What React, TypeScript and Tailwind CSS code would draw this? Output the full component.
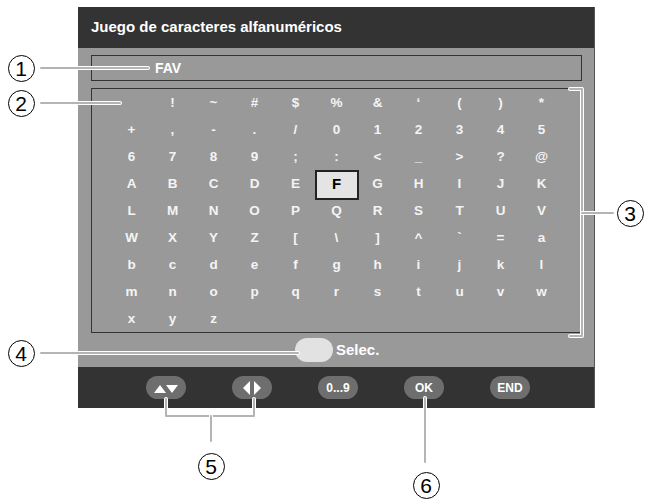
import React from "react";

const rows: string[][] = [
  [" ", "!", "~", "#", "$", "%", "&", "‘", "(", ")", "*"],
  ["+", ",", "-", ".", "/", "0", "1", "2", "3", "4", "5"],
  ["6", "7", "8", "9", ";", ":", "<", "_", ">", "?", "@"],
  ["A", "B", "C", "D", "E", "F", "G", "H", "I", "J", "K"],
  ["L", "M", "N", "O", "P", "Q", "R", "S", "T", "U", "V"],
  ["W", "X", "Y", "Z", "[", "\\", "]", "^", "`", "=", "a"],
  ["b", "c", "d", "e", "f", "g", "h", "i", "j", "k", "l"],
  ["m", "n", "o", "p", "q", "r", "s", "t", "u", "v", "w"],
  ["x", "y", "z"],
];

function Pill({ children }: { children: React.ReactNode }) {
  return (
    <div className="w-[40px] h-[23px] rounded-full bg-[#6e6e6e] flex items-center justify-center text-white text-[12px] font-bold">
      {children}
    </div>
  );
}

function Line({ d }: { d: string }) {
  return (
    <g>
      <path d={d} fill="none" stroke="#ffffff" strokeWidth={4} strokeLinecap="round" strokeLinejoin="round" />
      <path d={d} fill="none" stroke="#b4b4b4" strokeWidth={2} strokeLinecap="round" strokeLinejoin="round" />
    </g>
  );
}

function Num({ x, y, c }: { x: number; y: number; c: string }) {
  return (
    <div
      className="absolute w-[27px] h-[27px] rounded-full border-[1.3px] border-black bg-transparent flex items-center justify-center text-[21px] leading-none text-black"
      style={{ left: x - 13.5, top: y - 13.5 }}
    >
      <span className="mt-[1px]">{c}</span>
    </div>
  );
}

export default function App() {
  return (
    <div
      className="relative w-[646px] h-[500px] bg-white overflow-hidden"
      style={{ fontFamily: '"Liberation Sans", Arial, sans-serif' }}
    >
      <div className="ml-[78px] mt-[7px] w-[517px] h-[401px] flex flex-col border-r border-[#555]">
        <div className="h-[41px] bg-[#333333] flex items-center pl-[13px] text-white font-bold text-[15px]">
          Juego de caracteres alfanuméricos
        </div>
        <div className="flex-1 bg-[#999999] flex flex-col pl-[13px] pr-[12px] pt-[7px]">
          <div className="h-[26px] border-[1.5px] border-[#333] flex items-center pl-[63px] text-white font-bold text-[14px]">
            FAV
          </div>
          <div className="mt-[7px] h-[245px] border-[1.5px] border-[#333] pt-[1px] pl-[19px]">
            {rows.map((r, ri) => (
              <div key={ri} className="flex h-[27px]">
                {r.map((ch, ci) =>
                  ch === "F" ? (
                    <div key={ci} className="w-[41px] h-[27px] flex items-center justify-center">
                      <div className="w-[44px] h-[30px] shrink-0 bg-[#e4e4e4] border-2 border-[#222] flex items-center justify-center text-black font-bold text-[15px]">
                        F
                      </div>
                    </div>
                  ) : (
                    <div
                      key={ci}
                      className="w-[41px] h-[27px] flex items-center justify-center text-[#f4f4f4] font-bold text-[13.5px]"
                    >
                      {ch === " " ? "\u00a0" : ch}
                    </div>
                  )
                )}
              </div>
            ))}
          </div>
          <div className="h-[34px] flex items-center pl-[204px]">
            <div className="w-[38px] h-[24px] rounded-full bg-[#e2e2e2]" />
            <span className="ml-[3px] text-white font-bold text-[15px]">Selec.</span>
          </div>
        </div>
        <div className="h-[41px] bg-[#333333] flex items-center pl-[68px] gap-[46px]">
          <Pill>
            <svg width="26" height="12" viewBox="0 0 26 12">
              <path d="M1 11 L7 3 L13 11 Z" fill="white" />
              <path d="M13 3 L25 3 L19 11 Z" fill="white" />
            </svg>
          </Pill>
          <Pill>
            <svg width="22" height="16" viewBox="0 0 22 16">
              <path d="M9 1 L9 15 L2 8 Z" fill="white" />
              <path d="M13 1 L13 15 L20 8 Z" fill="white" />
            </svg>
          </Pill>
          <Pill>0...9</Pill>
          <Pill>OK</Pill>
          <Pill>END</Pill>
        </div>
      </div>

      <svg className="absolute inset-0 pointer-events-none" width="646" height="500">
        <Line d="M41 68 L148 68" />
        <Line d="M41 103 L120 103" />
        <Line d="M41 353 L298 353" />
        <Line d="M570 89 L582 89 L582 336 L570 336" />
        <Line d="M582 213 L613 213" />
        <Line d="M166 399 L166 416 L254 416 L254 399" />
        <Line d="M211 416 L211 441" />
        <Line d="M425 398 L425 462" />
      </svg>

      <Num x={21} y={68} c="1" />
      <Num x={21} y={103} c="2" />
      <Num x={630} y={213} c="3" />
      <Num x={21} y={353} c="4" />
      <Num x={211} y={466} c="5" />
      <Num x={426} y={485} c="6" />
    </div>
  );
}
